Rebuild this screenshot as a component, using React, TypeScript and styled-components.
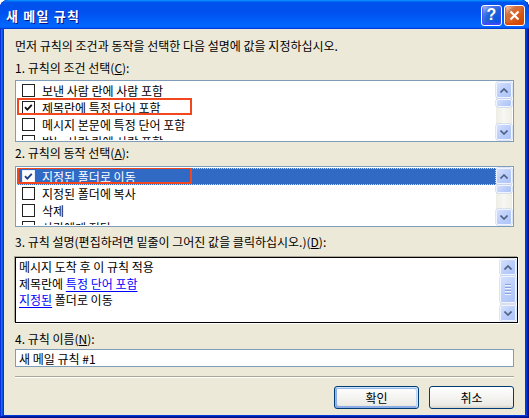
import React from "react";
import styled, { createGlobalStyle } from "styled-components";

const GlobalStyle = createGlobalStyle`
  html, body {
    margin: 0;
    padding: 0;
    background: #ffffff;
  }
  body {
    font-family: "Noto Sans CJK KR", "Noto Sans", sans-serif;
    font-size: 12px;
    color: #000;
  }
`;

const Window = styled.div`
  width: 529px;
  height: 418px;
  box-sizing: border-box;
  display: flex;
  flex-direction: column;
  border-radius: 8px 8px 0 0;
  overflow: hidden;
  background: #0831d9;
  box-shadow: inset -1px -1px #00138c, inset 1px 1px #0831d9,
    inset -2px -2px #001ea0, inset 2px 2px #166aee, inset -3px -3px #003bda,
    inset 3px 3px #0855dd;
`;

const TitleBar = styled.div`
  height: 29px;
  flex: none;
  display: flex;
  align-items: center;
  padding: 0 4px 0 6px;
  border-radius: 8px 8px 0 0;
  background: linear-gradient(
    180deg,
    #0997ff 0%,
    #0053ee 8%,
    #0050ee 40%,
    #0066ff 88%,
    #0066ff 93%,
    #005bff 95%,
    #003dd7 96%,
    #003dd7 100%
  );
`;

const TitleText = styled.div`
  flex: 1;
  color: #fff;
  font-weight: 700;
  font-size: 13px;
  letter-spacing: 1.2px;
  text-shadow: 1px 1px #0f1089;
  padding-top: 1px;
`;

const TitleButtons = styled.div`
  display: flex;
  gap: 2px;
  margin-top: 1px;
`;

const CaptionButton = styled.div<{ $kind: "help" | "close" }>`
  width: 21px;
  height: 21px;
  box-sizing: border-box;
  border: 1px solid #fff;
  border-radius: 3px;
  display: flex;
  align-items: center;
  justify-content: center;
  color: #fff;
  font-family: "Liberation Sans", Arial, sans-serif;
  font-weight: 700;
  font-size: 16px;
  background: ${(p) =>
    p.$kind === "help"
      ? "radial-gradient(circle at 90% 90%, #0054e9 0%, #2263d5 55%, #4479e4 70%, #a3bbec 90%, #fff 100%)"
      : "radial-gradient(circle at 90% 90%, #cc4600 0%, #dc6527 55%, #cd7546 70%, #ffccb2 90%, #fff 100%)"};
  box-shadow: ${(p) =>
    p.$kind === "help"
      ? "inset 0 -1px 2px 1px #4646ff"
      : "inset 0 -1px 2px 1px #da4600"};
`;

const Body = styled.div`
  flex: 1;
  margin: 0 4px 3px 4px;
  background: #ece9d8;
  display: flex;
  flex-direction: column;
  padding: 0 11px;
`;

const Caption = styled.div<{ $mt: number }>`
  margin-top: ${(p) => p.$mt}px;
  height: 16px;
  line-height: 16px;
  white-space: nowrap;
  u {
    text-decoration: underline;
    text-underline-offset: 1px;
  }
`;

const ListBox = styled.div<{ $h: number; $mt: number }>`
  margin-top: ${(p) => p.$mt}px;
  height: ${(p) => p.$h}px;
  box-sizing: border-box;
  border: 1px solid #7f9db9;
  background: #fff;
  padding: 1px;
  display: flex;
`;

const Rows = styled.div`
  flex: 1;
  overflow: hidden;
`;

const Row = styled.div<{ $selected?: boolean }>`
  position: relative;
  height: 17px;
  display: flex;
  align-items: center;
  gap: 7px;
  padding-left: 5px;
  white-space: nowrap;
  background: ${(p) => (p.$selected ? "#316ac5" : "transparent")};
  color: ${(p) => (p.$selected ? "#fff" : "#000")};
  &::before {
    content: "";
    position: absolute;
    inset: 0;
    border: 1px dotted ${(p) => (p.$selected ? "#c9d6ee" : "transparent")};
    pointer-events: none;
  }
`;

const RedMark = styled.span`
  position: absolute;
  left: 0;
  top: -1px;
  width: 175px;
  height: 17px;
  box-sizing: border-box;
  border: 2px solid #f2461e;
  pointer-events: none;
`;

const CheckBox = styled.span<{ $inSelection?: boolean }>`
  width: 13px;
  height: 13px;
  flex: none;
  box-sizing: border-box;
  border: 1px solid ${(p) => (p.$inSelection ? "#e8eefa" : "#222")};
  background: #fff;
  display: flex;
  align-items: center;
  justify-content: center;
`;

const ScrollBar = styled.div`
  width: 16px;
  flex: none;
  display: flex;
  flex-direction: column;
  gap: 1px;
  background: linear-gradient(90deg, #eeede5 0%, #f7f7f3 50%, #eeede5 100%);
`;

const ScrollPart = styled.div<{ $h: number }>`
  height: ${(p) => p.$h}px;
  flex: none;
  box-sizing: border-box;
  border: 1px solid #f0f4fe;
  border-radius: 2px;
  background: linear-gradient(135deg, #d4e0fd 0%, #bccefa 50%, #aec4f7 100%);
  box-shadow: 0 0 0 0.5px #b9c9ef;
  display: flex;
  flex-direction: column;
  align-items: center;
  justify-content: center;
  gap: 1px;
`;

const Track = styled.div`
  flex: 1;
`;

const Grip = styled.span`
  width: 6px;
  height: 1px;
  background: #8aa3e0;
  box-shadow: 0 1px 0 #eef3fe;
  margin-bottom: 1px;
`;

const DescBox = styled.div`
  margin-top: 7px;
  height: 66px;
  width: 503px;
  box-sizing: border-box;
  border: 1px solid #000;
  box-shadow: -1px -1px 0 #aca899, 1px 1px 0 #fff;
  background: #fff;
  padding: 1px;
  display: flex;
`;

const DescText = styled.div`
  flex: 1;
  padding: 0 2px;
  line-height: 16.5px;
  white-space: nowrap;
`;

const Link = styled.span`
  color: #0000ff;
  text-decoration: underline;
  text-underline-offset: 2px;
`;

const NameInput = styled.input`
  margin: 2px 0 0 0;
  height: 18px;
  box-sizing: border-box;
  border: 1px solid #7f9db9;
  background: #fff;
  padding: 0 3px;
  font: inherit;
  font-size: 12px;
  color: #000;
  outline: none;
`;

const Separator = styled.div`
  margin-top: 9px;
  border-top: 1px solid #aca899;
  border-bottom: 1px solid #fff;
`;

const ButtonRow = styled.div`
  margin-top: 8px;
  display: flex;
  justify-content: flex-end;
  gap: 10px;
`;

const Button = styled.button<{ $default?: boolean }>`
  width: 85px;
  height: 23px;
  box-sizing: border-box;
  border: 1px solid #003c74;
  border-radius: 3px;
  padding: 0;
  font: inherit;
  font-size: 12px;
  color: #000;
  background: linear-gradient(180deg, #fff 0%, #ecebe6 86%, #d6d0c5 100%);
  box-shadow: ${(p) =>
    p.$default
      ? "inset -1px 1px #cee7ff, inset 1px 2px #98b8ea, inset -2px 2px #bcd4f6, inset 1px -1px #89ade4, inset 2px -2px #89ade4"
      : "none"};
`;

const Arrow = ({ up }: { up?: boolean }) => (
  <svg width="8" height="5" viewBox="0 0 8 5">
    <polyline
      points={up ? "0.5,4.5 4,1 7.5,4.5" : "0.5,0.5 4,4 7.5,0.5"}
      fill="none"
      stroke="#4d6185"
      strokeWidth="1.6"
    />
  </svg>
);

const CheckMark = ({ color }: { color: string }) => (
  <svg width="11" height="11" viewBox="0 0 11 11">
    <polyline
      points="2,5.2 4.3,7.6 8.8,2.8"
      fill="none"
      stroke={color}
      strokeWidth="1.8"
    />
  </svg>
);

type Item = { text: string; checked?: boolean; selected?: boolean; marked?: boolean };

const conditions: Item[] = [
  { text: "보낸 사람 란에 사람 포함" },
  { text: "제목란에 특정 단어 포함", checked: true, marked: true },
  { text: "메시지 본문에 특정 단어 포함" },
  { text: "받는 사람 란에 사람 포함" },
];

const actions: Item[] = [
  { text: "지정된 폴더로 이동", checked: true, selected: true, marked: true },
  { text: "지정된 폴더에 복사" },
  { text: "삭제" },
  { text: "사람에게 전달" },
];

const CheckList = ({ items, height, mt }: { items: Item[]; height: number; mt: number }) => (
  <ListBox $h={height} $mt={mt}>
    <Rows>
      {items.map((it) => (
        <Row key={it.text} $selected={it.selected}>
          <CheckBox $inSelection={it.selected}>
            {it.checked && <CheckMark color={it.selected ? "#1b3f86" : "#111"} />}
          </CheckBox>
          {it.text}
          {it.marked && <RedMark />}
        </Row>
      ))}
    </Rows>
    <ScrollBar>
      <ScrollPart $h={16}>
        <Arrow up />
      </ScrollPart>
      <ScrollPart $h={8} />
      <Track />
      <ScrollPart $h={16}>
        <Arrow />
      </ScrollPart>
    </ScrollBar>
  </ListBox>
);

export default function App() {
  return (
    <>
      <GlobalStyle />
      <Window>
        <TitleBar>
          <TitleText>새 메일 규칙</TitleText>
          <TitleButtons>
            <CaptionButton $kind="help">?</CaptionButton>
            <CaptionButton $kind="close">
              <svg width="11" height="11" viewBox="0 0 11 11">
                <path d="M1.5 1.5 L9.5 9.5 M9.5 1.5 L1.5 9.5" stroke="#fff" strokeWidth="2.2" />
              </svg>
            </CaptionButton>
          </TitleButtons>
        </TitleBar>
        <Body>
          <Caption $mt={9}>먼저 규칙의 조건과 동작을 선택한 다음 설명에 값을 지정하십시오.</Caption>
          <Caption $mt={6}>
            1. 규칙의 조건 선택(<u>C</u>):
          </Caption>
          <CheckList items={conditions} height={62} mt={4} />
          <Caption $mt={3}>
            2. 규칙의 동작 선택(<u>A</u>):
          </Caption>
          <CheckList items={actions} height={61} mt={5} />
          <Caption $mt={7}>
            3. 규칙 설명(편집하려면 밑줄이 그어진 값을 클릭하십시오.)(<u>D</u>):
          </Caption>
          <DescBox>
            <DescText>
              <div>메시지 도착 후 이 규칙 적용</div>
              <div>
                제목란에 <Link>특정 단어 포함</Link>
              </div>
              <div>
                <Link>지정된</Link> 폴더로 이동
              </div>
            </DescText>
            <ScrollBar>
              <ScrollPart $h={16}>
                <Arrow up />
              </ScrollPart>
              <ScrollPart $h={27}>
                <Grip />
                <Grip />
                <Grip />
                <Grip />
              </ScrollPart>
              <Track />
              <ScrollPart $h={16}>
                <Arrow />
              </ScrollPart>
            </ScrollBar>
          </DescBox>
          <Caption $mt={8}>
            4. 규칙 이름(<u>N</u>):
          </Caption>
          <NameInput readOnly value="새 메일 규칙 #1" />
          <Separator />
          <ButtonRow>
            <Button $default>확인</Button>
            <Button>취소</Button>
          </ButtonRow>
        </Body>
      </Window>
    </>
  );
}
